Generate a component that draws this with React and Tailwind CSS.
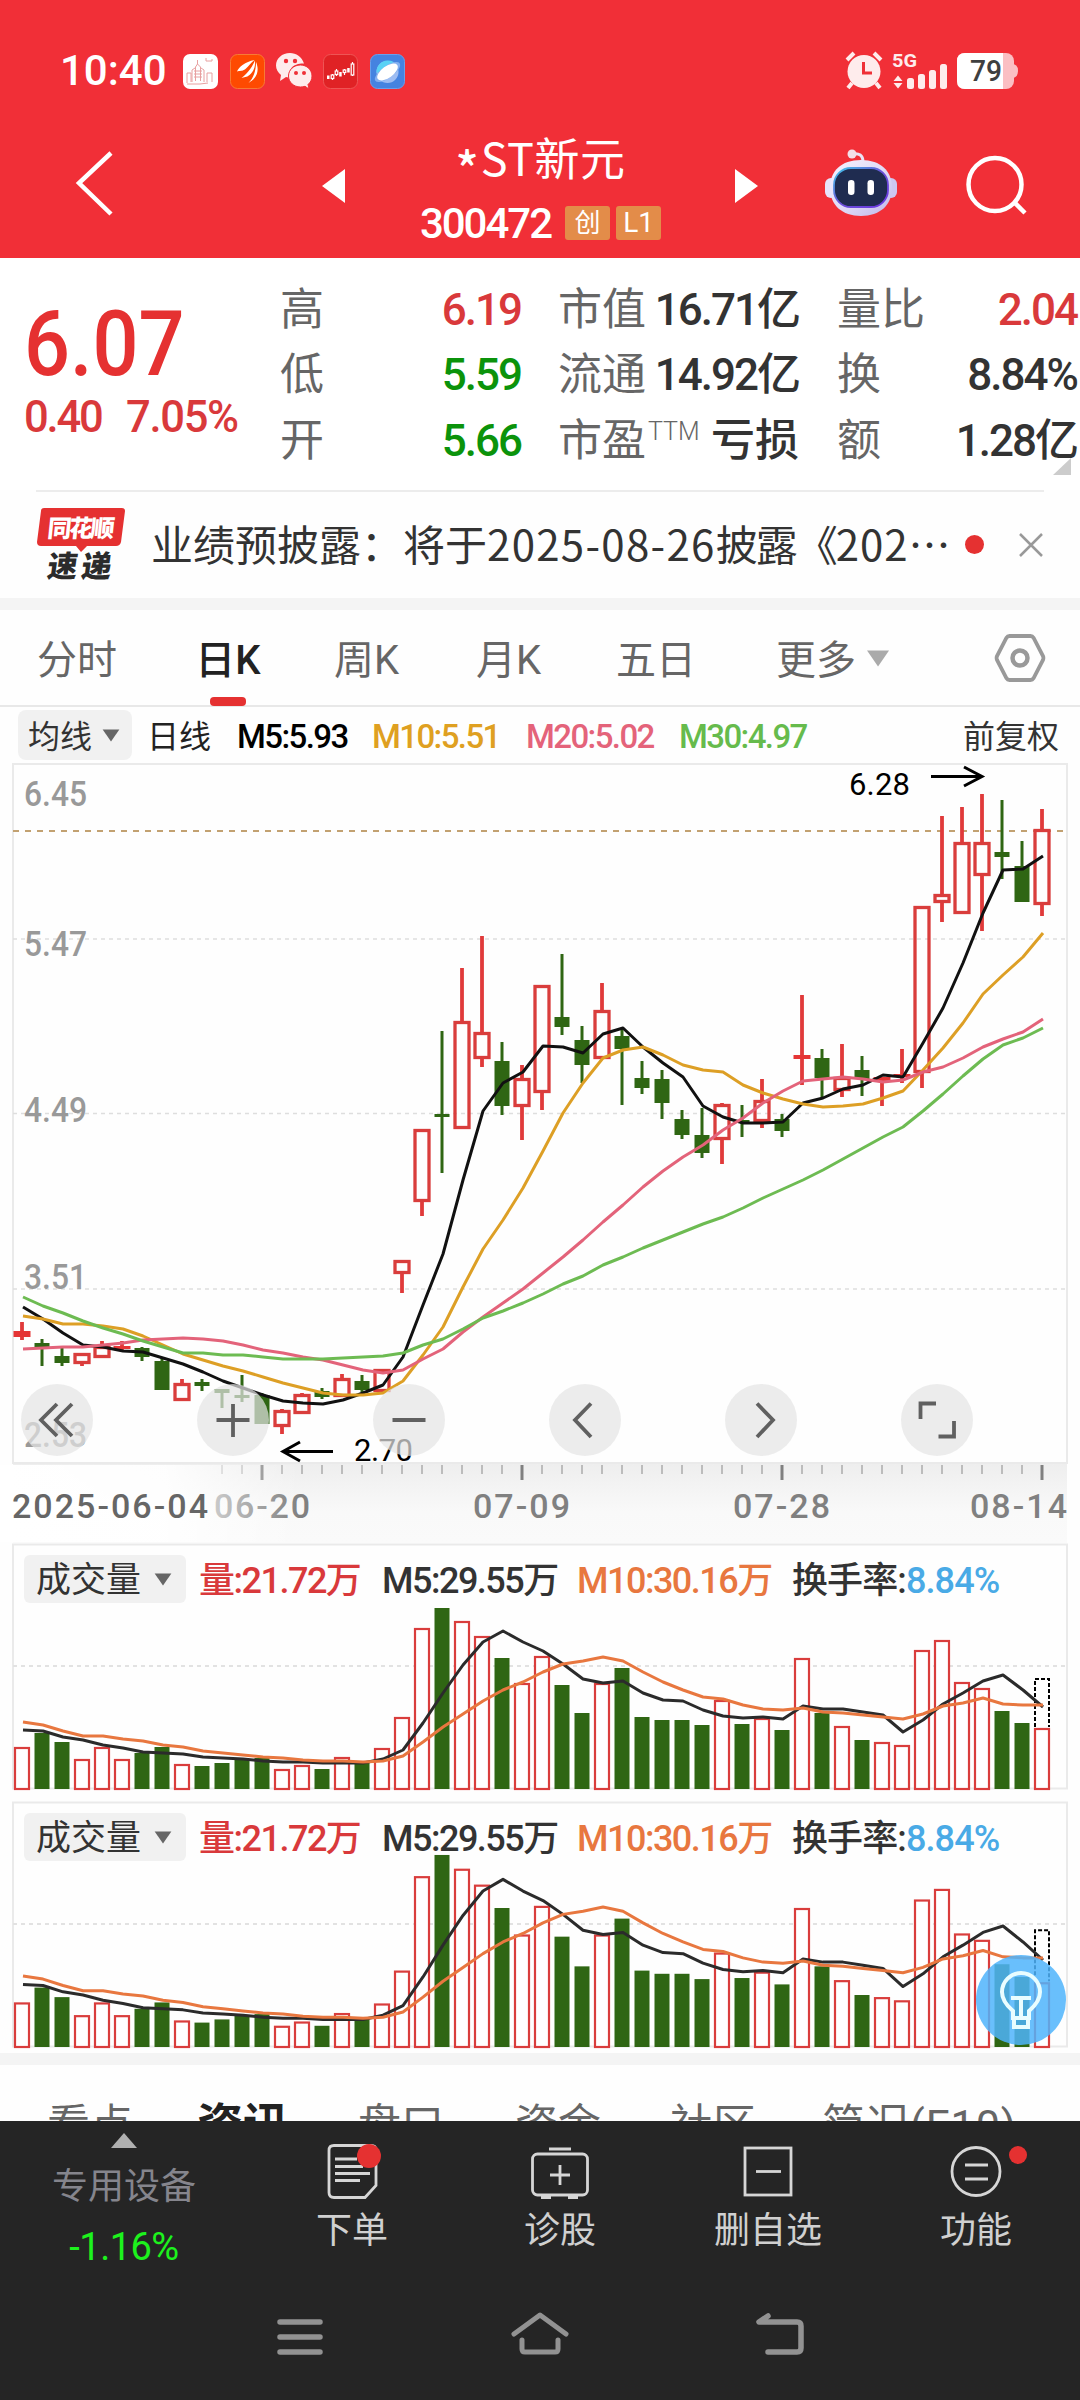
const NUM = 'Roboto, "Noto Sans CJK SC", sans-serif'

// [direction, body top, body bottom, wick top, wick bottom]
const candles = [
  ['r', 1331, 1337, 1322, 1340], ['g', 1343, 1347, 1339, 1366], ['g', 1356, 1363, 1348, 1366], ['r', 1353, 1364, 1353, 1366],
  ['r', 1346, 1358, 1341, 1358], ['r', 1346, 1349, 1341, 1351], ['g', 1348, 1357, 1347, 1361], ['g', 1361, 1390, 1358, 1390],
  ['r', 1383, 1401, 1379, 1401], ['g', 1382, 1386, 1379, 1391], ['g', 1389, 1393, 1389, 1408], ['g', 1395, 1398, 1375, 1402],
  ['g', 1395, 1424, 1393, 1424], ['r', 1410, 1427, 1409, 1434], ['r', 1394, 1414, 1393, 1414], ['g', 1391, 1397, 1388, 1399],
  ['r', 1378, 1397, 1374, 1397], ['g', 1381, 1390, 1375, 1392], ['r', 1369, 1392, 1369, 1392], ['r', 1260, 1274, 1260, 1293],
  ['r', 1129, 1202, 1129, 1216], ['g', 1114, 1117, 1031, 1173], ['r', 1021, 1129, 968, 1129], ['r', 1032, 1059, 936, 1067],
  ['g', 1061, 1106, 1042, 1115], ['r', 1078, 1107, 1065, 1140], ['r', 985, 1093, 985, 1110], ['g', 1017, 1027, 954, 1035],
  ['g', 1040, 1065, 1026, 1083], ['r', 1010, 1059, 983, 1059], ['g', 1036, 1049, 1028, 1105], ['g', 1078, 1088, 1061, 1094],
  ['g', 1079, 1103, 1070, 1119], ['g', 1119, 1135, 1110, 1139], ['g', 1135, 1153, 1108, 1158], ['r', 1104, 1140, 1103, 1164],
  ['g', 1120, 1122, 1105, 1137], ['r', 1100, 1122, 1079, 1128], ['g', 1119, 1131, 1114, 1137], ['r', 1055, 1059, 995, 1085],
  ['g', 1058, 1078, 1049, 1097], ['r', 1077, 1091, 1044, 1097], ['g', 1070, 1079, 1056, 1096], ['r', 1077, 1081, 1077, 1106],
  ['r', 1074, 1077, 1049, 1083], ['r', 906, 1073, 906, 1088], ['r', 894, 903, 816, 922], ['r', 842, 914, 807, 914],
  ['r', 842, 876, 794, 931], ['g', 852, 857, 800, 879], ['g', 866, 902, 841, 902], ['r', 829, 905, 809, 916],
]

const ma5 = [1307, 1319, 1333, 1345, 1347, 1351, 1352, 1358, 1364, 1372, 1381, 1388, 1395, 1401, 1403, 1404, 1400, 1393, 1385, 1357, 1305, 1254, 1180, 1111, 1083, 1072, 1046, 1047, 1053, 1034, 1028, 1047, 1063, 1077, 1106, 1117, 1123, 1123, 1122, 1103, 1098, 1089, 1085, 1075, 1077, 1043, 1008, 963, 913, 870, 869, 856]
const ma10 = [1316, 1319, 1324, 1324, 1326, 1329, 1336, 1345, 1354, 1360, 1366, 1371, 1377, 1383, 1388, 1393, 1395, 1395, 1393, 1381, 1355, 1327, 1287, 1249, 1220, 1188, 1151, 1113, 1083, 1058, 1050, 1047, 1055, 1065, 1070, 1072, 1085, 1093, 1099, 1104, 1107, 1106, 1104, 1098, 1091, 1070, 1048, 1023, 994, 975, 957, 933]
const ma20 = [1349, 1348, 1347, 1347, 1345, 1343, 1340, 1339, 1338, 1339, 1341, 1345, 1350, 1353, 1357, 1360, 1365, 1370, 1373, 1370, 1359, 1349, 1332, 1317, 1303, 1289, 1273, 1257, 1240, 1222, 1205, 1187, 1171, 1157, 1145, 1130, 1118, 1103, 1091, 1081, 1079, 1077, 1079, 1082, 1080, 1072, 1067, 1058, 1047, 1039, 1032, 1019]
const ma30 = [1297, 1306, 1313, 1321, 1328, 1334, 1341, 1347, 1353, 1353, 1355, 1355, 1357, 1359, 1359, 1359, 1358, 1357, 1356, 1353, 1345, 1339, 1329, 1318, 1311, 1303, 1294, 1284, 1276, 1265, 1257, 1248, 1240, 1232, 1224, 1217, 1208, 1198, 1189, 1180, 1170, 1159, 1148, 1137, 1127, 1111, 1094, 1076, 1059, 1045, 1038, 1028]

// bar heights measured up from the panel baseline
const volumes = [
  ['r', 42], ['g', 56], ['g', 47], ['r', 30], ['r', 42], ['r', 30], ['g', 36], ['g', 42], ['r', 25], ['g', 23], ['g', 26], ['g', 30], ['g', 31],
  ['r', 20], ['r', 24], ['g', 20], ['r', 32], ['g', 28], ['r', 41], ['r', 72], ['r', 161], ['g', 181], ['r', 168], ['r', 153], ['g', 131], ['r', 106],
  ['r', 133], ['g', 104], ['g', 76], ['r', 106], ['g', 121], ['g', 72], ['g', 69], ['g', 69], ['g', 64], ['r', 89], ['g', 65], ['r', 71], ['g', 59],
  ['r', 131], ['g', 76], ['r', 63], ['g', 49], ['r', 47], ['r', 44], ['r', 139], ['r', 149], ['r', 107], ['r', 101], ['g', 78], ['g', 66], ['r', 61],
]
const vol5 = [59, 58, 52, 49, 44, 41, 37, 36, 35, 32, 31, 30, 28, 27, 27, 26, 26, 26, 30, 39, 66, 96, 124, 147, 158, 147, 138, 125, 110, 106, 108, 96, 89, 88, 79, 73, 71, 72, 70, 83, 80, 80, 77, 74, 57, 69, 85, 96, 108, 114, 99, 82]
const vol10 = [67, 64, 58, 53, 53, 50, 48, 44, 42, 38, 36, 34, 32, 31, 29, 28, 28, 27, 28, 33, 47, 62, 75, 88, 99, 107, 117, 125, 128, 132, 128, 117, 107, 99, 92, 90, 84, 80, 79, 81, 77, 76, 74, 72, 70, 75, 83, 86, 91, 85, 84, 84]

const GREEN = '#2f6613'
const RED = '#d93d3c'

const cx = (i) => 22 + i * 20
const toPoints = (ys) => ys.map((y, i) => `${cx(i) + 1},${y}`).join(' ')

function Down({ className }) {
  return (
    <svg viewBox="0 0 18 14" className={className} fill="currentColor">
      <path d="M0 0.5h18L9 13.5z" />
    </svg>
  )
}

function StatusBar() {
  return (
    <div className="flex h-[71px] items-center pt-[1px] pl-[60px] text-white mt-[35px]">
      <span className="w-[123px] text-[42px] leading-none font-medium">10:40</span>
      <svg width="35" height="35" viewBox="0 0 35 35">
        <rect width="35" height="35" rx="7" fill="#fff" />
        <g stroke="#e8a0a0" fill="none" strokeWidth="1">
          <path d="M14.500 6v4l-2 3v14M14.500 10l3 3v14M9 28V16l3-2M21 28V16l-3-2M4 29V19h4v9M24 28v-9h5v9M11 17h8M11 20h8M11 23h8" />
          <path d="M4 30h13l8-1M23 4v3h6V5" />
        </g>
      </svg>
      <svg width="35" height="35" viewBox="0 0 35 35" className="ml-[12px]">
        <rect x=".5" y=".5" width="34" height="34" rx="7" fill="#fe4a01" stroke="#f77b35" />
        <g fill="#fff">
          <path d="M7 17.500c2-5 8-9.500 17.500-11.500-4 3-5.500 6-9 9-3 2.500-6 1.500-8.500 2.500z" />
          <path d="M11.500 24c4-3.500 9.500-8 13.500-17.500.5 7-1.500 11-5.500 14.500-3 2.500-5.500 2-8 3z" />
          <path d="M18.500 29c5-5 7.500-12 7.500-21 3.500 8 1.500 16-7.500 21z" />
        </g>
      </svg>
      <svg width="36" height="36" viewBox="0 0 36 36" className="ml-[11px]">
        <path d="M14 0C6 0 0 5.500 0 12.500c0 4 2 7 5 9.500l-1 6 6-4c2 .6 4 .6 5 .5C11 15 19 10 28 10.500 26 4 20 0 14 0z" fill="#feecec" />
        <path d="M24.500 12C17.500 12 12.500 17 12.500 23s5 11 12 11c1.500 0 3-.2 4.500-.7L33 36l-1-4.500c2.500-2 4-5 4-8.500 0-6-5-11-11.500-11z" fill="#feecec" stroke="#ef3037" strokeWidth="1" />
        <g fill="#ef3037">
          <circle cx="10" cy="8" r="2.200" /><circle cx="19" cy="8" r="2.200" /><circle cx="20" cy="20" r="2" /><circle cx="28" cy="20" r="2" />
        </g>
      </svg>
      <svg width="35" height="35" viewBox="0 0 35 35" className="ml-[11px]">
        <rect x=".5" y=".5" width="34" height="34" rx="7" fill="#e02225" stroke="#ee5555" />
        <g fill="none" stroke="#fff" strokeWidth="1.200">
          <path d="M9.500 20v6M13.500 15v7M21.500 15v6M29.500 8v14" />
          <rect x="8.200" y="21" width="2.600" height="3.500" fill="#e02225" />
          <rect x="12.200" y="17" width="2.600" height="3.500" fill="#e02225" />
          <rect x="20.200" y="16" width="2.600" height="2.500" fill="#e02225" />
          <rect x="28.200" y="10" width="2.600" height="11" fill="#e02225" />
        </g>
        <path d="M4 21.500h2.500V25H4zM16.200 18h2.500v4.500h-2.500zM24.200 14h2.500v4.500h-2.500z" fill="#fff" />
      </svg>
      <svg width="35" height="35" viewBox="0 0 35 35" className="ml-[12px]">
        <rect x=".5" y=".5" width="34" height="34" rx="7" fill="#4583e0" stroke="#69a0ec" />
        <circle cx="17.500" cy="18" r="11" fill="#9dbcf2" />
        <path d="M6.500 19C6 11 12 6 18 6.500c4 0 7 2 8.500 4.500z" fill="#5ad2f5" />
        <ellipse cx="17.500" cy="18" rx="15" ry="6" transform="rotate(-36 17.500 18)" fill="#83aff0" />
        <ellipse cx="17.500" cy="18" rx="12" ry="5.800" transform="rotate(-36 17.500 18)" fill="#fff" />
      </svg>
      <svg width="174" height="38" viewBox="0 0 174 38" className="ml-auto mr-[60px] overflow-visible">
        <g fill="#feecec">
          <circle cx="18" cy="19.500" r="16.500" />
          <path d="M1 8l7-7M28 1l7 7M6 31l-4 5M30 31l4 5" stroke="#feecec" strokeWidth="4" />
          <path d="M47.500 29l4.500-5.500 4.500 5.500zM47.500 31l4.500 5.500 4.500-5.500z" />
          <rect x="61" y="26" width="7" height="11" rx="2.500" />
          <rect x="72" y="22" width="7" height="15" rx="2.500" />
          <rect x="83" y="18" width="7" height="19" rx="2.500" />
          <rect x="94" y="12" width="7" height="25" rx="2.500" />
        </g>
        <path d="M17.500 10v11h8.500" fill="none" stroke="#ef3037" strokeWidth="3" />
        <text x="46" y="14.500" fontSize="18.500" fontWeight="700" fill="#feecec" textLength="25" lengthAdjust="spacingAndGlyphs">5G</text>
        <path d="M166 12q6 0 6 7t-6 7z" fill="#fbc0c4" />
        <rect x="111" y="1" width="57" height="36" rx="8" fill="#fbbfc3" />
        <path d="M119 1h38v36h-38q-8 0-8-8V9q0-8 8-8z" fill="#fff" />
        <text x="124" y="29" fontSize="29" fontWeight="500" fill="#3f3f3f" textLength="32" lengthAdjust="spacingAndGlyphs">79</text>
      </svg>
    </div>
  )
}

function TitleBar() {
  return (
    <div className="flex h-[151px] items-start text-white">
      <svg width="60" height="80" viewBox="0 0 60 80" className="mt-[37px] ml-[66px]">
        <path d="M45 10L13 40l32 31" fill="none" stroke="#fff" strokeWidth="4.500" />
      </svg>
      <svg width="24" height="34" viewBox="0 0 24 34" className="mt-[63px] ml-[196px]"><path d="M0 17L23 0v34z" fill="#fff" /></svg>
      <div className="flex w-[389px] flex-col items-center pt-[27px]">
        <div className="flex text-[45px] leading-[48px] font-['Noto_Sans_CJK_SC',sans-serif]">
          <span className="pt-[9px] text-[48px] font-medium">*</span>
          <span className="ml-[2px] tracking-[0.500px]">ST新元</span>
        </div>
        <div className="mt-[14px] flex h-[38px] items-center">
          <span className="pt-[2px] text-[42px] leading-none font-medium tracking-[-2px]">300472</span>
          <span className="ml-[14px] flex h-[34px] w-[45px] items-center justify-center rounded-[3px] bg-[#e38c49] text-[26px] leading-none">创</span>
          <span className="ml-[6px] flex h-[34px] w-[45px] items-center justify-center rounded-[3px] bg-[#e38c49] text-[28px] leading-none">L1</span>
        </div>
      </div>
      <svg width="24" height="34" viewBox="0 0 24 34" className="mt-[63px]"><path d="M23 17L0 0v34z" fill="#fff" /></svg>
      <svg width="74" height="68" viewBox="0 0 74 68" className="mt-[43px] ml-[65px]">
        <defs>
          <linearGradient id="shell" x1="0" y1="0" x2="1" y2="1">
            <stop offset="0" stopColor="#f6f3ff" /><stop offset=".6" stopColor="#dcd6f5" /><stop offset="1" stopColor="#bdb6e8" />
          </linearGradient>
          <linearGradient id="visor" x1="0" y1="0" x2="1" y2="1">
            <stop offset="0" stopColor="#3fc8e8" /><stop offset=".5" stopColor="#6a50d8" /><stop offset="1" stopColor="#6a35e0" />
          </linearGradient>
        </defs>
        <path d="M28 5q11-2 11 8" fill="none" stroke="#e9e2f4" strokeWidth="3" />
        <circle cx="28" cy="5" r="4.500" fill="#f3dfe8" />
        <rect x="1" y="29" width="12" height="20" rx="6" fill="#e7e3fa" />
        <rect x="61" y="29" width="12" height="20" rx="6" fill="#cdc6f0" />
        <path d="M37 11c20 0 31 11 31 28S56 67 37 67 6 56 6 39s11-28 31-28z" fill="url(#shell)" />
        <rect x="10" y="19" width="54" height="39" rx="17" fill="#1f2c50" stroke="url(#visor)" strokeWidth="1.800" />
        <rect x="24" y="31" width="6.500" height="15" rx="3.200" fill="#fff" />
        <rect x="43.500" y="31" width="6.500" height="15" rx="3.200" fill="#fff" />
      </svg>
      <svg width="64" height="64" viewBox="0 0 64 64" className="mt-[48px] ml-[66px]">
        <circle cx="31" cy="30.500" r="26.500" fill="none" stroke="#fff" strokeWidth="4.500" />
        <path d="M50 48l11 11" stroke="#fff" strokeWidth="4.500" />
      </svg>
    </div>
  )
}

function Stat({ label, sup, value, color }) {
  return (
    <div className="flex h-[65.5px] items-center justify-between">
      <span className="flex items-center text-[44px] leading-none text-[#666]">
        {label}
        {sup && <sup className="-mt-[18px] ml-[2px] top-0 text-[25px] leading-none font-light">{sup}</sup>}
      </span>
      <span className={`mr-[2px] text-[44px] leading-none font-medium ${value === '亏损' ? 'tracking-normal' : 'tracking-[-2px]'} ${color || 'text-[#333]'}`}>{value}</span>
    </div>
  )
}

function Quote() {
  return (
    <div className="flex h-[232px] bg-white">
      <div className="w-[254px] pl-[24px]">
        <div className="mt-[42px] h-[88px] origin-left scale-x-[.89] text-[91px] leading-[88px] font-medium text-[#e53131]">6.07</div>
        <div className="mt-[8px] flex text-[43.500px] leading-[44px] font-medium text-[#d9393b]">
          <span className="w-[102px] tracking-[-2.200px]">0.40</span>
          <span className="tracking-[-1.300px]">7.05%</span>
        </div>
      </div>
      <div className="mt-[19px] ml-[26px] w-[243px]">
        <Stat label="高" value="6.19" color="text-[#d9393b]" />
        <Stat label="低" value="5.59" color="text-[#0b930b]" />
        <Stat label="开" value="5.66" color="text-[#0b930b]" />
      </div>
      <div className="mt-[19px] ml-[35px] w-[243px]">
        <Stat label="市值" value="16.71亿" />
        <Stat label="流通" value="14.92亿" />
        <Stat label="市盈" sup="TTM" value="亏损" />
      </div>
      <div className="relative mt-[19px] ml-[36px] w-[242px]">
        <Stat label="量比" value="2.04" color="text-[#d9393b]" />
        <Stat label="换" value="8.84%" />
        <Stat label="额" value="1.28亿" />
        <svg viewBox="0 0 18 17" className="absolute top-[181px] right-[8px] h-[17px] w-[18px]"><path d="M18 0v17H0z" fill="#ccc" /></svg>
      </div>
    </div>
  )
}

function News() {
  return (
    <div className="mx-[36px] flex h-[108px] items-start border-t-2 border-[#ececec]">
      <svg width="90" height="76" viewBox="0 0 90 76" className="mt-[15px] overflow-visible">
        <path d="M8 1h78q3 0 3 3l-4 31q-1 4-5 4H51l-6 6-5-6H5q-4 0-4-4L5 4q0-3 3-3z" fill="#e53131" />
        <text x="11" y="30" transform="skewX(-6) translate(3 0)" fontSize="24" fontWeight="900" fill="#fff" textLength="67">同花顺</text>
        <text x="11" y="70" transform="skewX(-8) translate(9 0)" fontSize="30" fontWeight="900" fill="#2b2b2b" textLength="64">速递</text>
      </svg>
      <div className="mt-[25px] ml-[25px] w-[808px] text-[42px] leading-[52px] whitespace-nowrap text-[#333] font-['Noto_Sans_CJK_SC',sans-serif]">
        业绩预披露：将于<span className="tracking-[1.300px]">2025-08-26</span><span className="tracking-[-2px]">披露《</span><span className="tracking-[1px]">202…</span>
      </div>
      <i className="mt-[43px] ml-[6px] size-[19px] shrink-0 rounded-full bg-[#e53131]" />
      <svg width="26" height="26" viewBox="0 0 26 26" className="mt-[40px] ml-auto"><path d="M2 2l22 22M24 2L2 24" stroke="#999" strokeWidth="2.500" /></svg>
    </div>
  )
}

const tabs = [
  ['分时', 'w-[159px]'], ['日K', 'w-[138px]'], ['周K', 'w-[142px]'], ['月K', 'w-[140px]'], ['五日', 'w-[160px]'], ['更多', 'w-[91px]'],
]

function PeriodTabs() {
  return (
    <div className="flex h-[97px] items-stretch border-b-2 border-[#e8e8e8] pl-[37px] text-[40px] text-[#666]">
      {tabs.map(([t, w]) => (
        <div key={t} className={`${w} shrink-0 pt-[21px]`}>
          {t === '日K' ? (
            <div className="flex w-[64px] flex-col items-center font-medium whitespace-nowrap text-[#222]">
              <span className="h-[66px] leading-[60px]">{t}</span>
              <i className="h-[9px] w-[36px] rounded-[4px] bg-[#e53131]" />
            </div>
          ) : (
            <span className="leading-[60px]">{t}</span>
          )}
        </div>
      ))}
      <Down className="mt-[39px] h-[19px] w-[22px] text-[#aaa]" />
      <svg width="52" height="50" viewBox="0 0 52 50" className="mt-[23px] ml-auto mr-[34px]" fill="none" stroke="#999">
        <path d="M15.500 3h21q2 0 3 1.700L49 23q.8 2 0 4l-9.500 18.300q-1 1.700-3 1.700h-21q-2 0-3-1.700L3 27q-.8-2 0-4l9.500-18.300q1-1.700 3-1.700z" strokeWidth="3.800" />
        <circle cx="26" cy="25" r="7.500" strokeWidth="4.500" />
      </svg>
    </div>
  )
}

function IndicatorRow() {
  return (
    <div className="flex h-[56px] items-start pt-[3px] text-[33px] leading-[54px] font-medium tracking-[-1.600px] whitespace-nowrap">
      <div className="ml-[18px] flex h-[50px] w-[114px] items-center rounded-[8px] bg-[#f1f1f1] pt-[3px] pl-[10px] text-[32px] font-normal tracking-normal text-[#333]">
        均线<Down className="mb-[3px] ml-[10px] h-[13px] w-[18px] text-[#666]" />
      </div>
      <span className="ml-[15px] w-[90px] text-[32px] font-normal tracking-normal text-[#222]">日线</span>
      <span className="w-[135px] text-black">M5:5.93</span>
      <span className="w-[154px] text-[#dfa021]">M10:5.51</span>
      <span className="w-[153px] text-[#e4637a]">M20:5.02</span>
      <span className="text-[#66bb4c]">M30:4.97</span>
      <span className="mr-[21px] ml-auto text-[32px] font-normal tracking-normal text-[#333]">前复权</span>
    </div>
  )
}

const priceLabels = [['6.45', 806], ['5.47', 956], ['4.49', 1122], ['3.51', 1289], ['2.53', 1447]]
const dates = [['07-09', 473], ['07-28', 733], ['08-14', 970]]
const tools = [
  [57, 'M0-16L-16 0l16 16M15-16L-1 0l16 16'],
  [233, 'M0-16v33M-16.500 0h33'],
  [409, 'M-16.500 0h33'],
  [585, 'M6-16.500L-10 0 6 17'],
  [761, 'M-4-16.500L12 0-4 17'],
  [937, 'M-16.500-1v-15.500h15.500M1.500 16.500h15.500V1'],
]

function CandleChart() {
  return (
    <svg width="1080" height="781" viewBox="0 762 1080 781" className="block" fontFamily={NUM}>
      <defs>
        <linearGradient id="axis" x1="0" y1="0" x2="0" y2="1">
          <stop offset="0" stopColor="#eeeeee" /><stop offset=".6" stopColor="#f9f9f9" /><stop offset="1" stopColor="#fafafa" />
        </linearGradient>
        <linearGradient id="fade" x1="0" x2="1">
          <stop offset="0" stopColor="#fff" /><stop offset=".55" stopColor="#fff" stopOpacity=".92" /><stop offset="1" stopColor="#fff" stopOpacity="0" />
        </linearGradient>
      </defs>

      <rect x="13" y="1464" width="1054" height="79" fill="url(#axis)" />
      {candles.map((_, i) => {
        const major = i === 12 || i === 25 || i === 38 || i === 51
        return i > 9 && <path key={i} d={`M${cx(i)} 1465v${major ? 15 : 9}`} stroke={major ? '#808080' : '#999'} strokeWidth={major ? 3 : 1.2} />
      })}
      <g fontSize="34" fontWeight="500" fill="#808080">
        <text x="214" y="1518" textLength="96">06-20</text>
        {dates.map(([d, x]) => <text key={d} x={x} y="1518" textLength="97">{d}</text>)}
      </g>
      <rect x="0" y="1465" width="300" height="77" fill="url(#fade)" />
      <text x="12" y="1518" fontSize="34" fontWeight="500" fill="#666" textLength="196">2025-06-04</text>

      <rect x="13" y="764" width="1054" height="699" fill="none" stroke="#eaeaea" strokeWidth="2" />
      <path d="M13 939h1054M13 1113.500h1054M13 1289h1054" stroke="#dedede" strokeWidth="1.500" strokeDasharray="4 4" />
      <path d="M13 831h1054" stroke="#c2a171" strokeWidth="2" strokeDasharray="6 6" />
      {priceLabels.map(([t, y]) => (
        <text key={t} x="24" y={y} fontSize="35" fontWeight="500" fill="#999" textLength="63" lengthAdjust="spacingAndGlyphs">{t}</text>
      ))}

      {candles.map(([c, top, bottom, high, low], i) => {
        const x = cx(i)
        if (c === 'g') {
          return (
            <g key={i} fill={GREEN}>
              <rect x={x - 1.5} y={high} width="3" height={low - high} />
              <rect x={x - 7.5} y={top} width="15" height={bottom - top} />
            </g>
          )
        }
        return (
          <g key={i}>
            <path d={`M${x} ${high}V${top}M${x} ${bottom}V${low}`} stroke="#e03a3a" strokeWidth="3.8" />
            {bottom - top < 7
              ? <rect x={x - 8.5} y={top} width="17" height={bottom - top} fill="#e53535" />
              : <rect x={x - 7} y={top + 1.5} width="14" height={bottom - top - 3} fill="none" stroke={RED} strokeWidth="3.3" />}
          </g>
        )
      })}

      <g fill="none" strokeWidth="3" strokeLinejoin="round">
        <polyline points={toPoints(ma5)} stroke="#111" />
        <polyline points={toPoints(ma10)} stroke="#dd9f25" />
        <polyline points={toPoints(ma20)} stroke="#e3637a" />
        <polyline points={toPoints(ma30)} stroke="#6dbb52" />
      </g>

      <g fontSize="31" fill="#000">
        <text x="849" y="795" textLength="61">6.28</text>
        <text x="354" y="1461" textLength="59">2.70</text>
      </g>
      <path d="M931 776.500h50M964 767l18 9.500-18 9.500M333 1451.500h-50M300 1442l-17 9.500 17 9.500" fill="none" stroke="#000" strokeWidth="3" />

      {tools.map(([x, d]) => (
        <g key={x} transform={`translate(${x} 1420)`}>
          <circle r="36" fill="#e4e4e4" fillOpacity=".71" />
          <path d={d} fill="none" stroke="#606060" strokeWidth="3.800" />
        </g>
      ))}
    </svg>
  )
}

function VolumePanel({ height, scale }) {
  const base = 246
  return (
    <div className="grid shrink-0 overflow-hidden" style={{ height }}>
      <svg width="1080" height={height} viewBox={`0 0 1080 ${height}`} className="[grid-area:1/1]">
        <rect x="13" y="1.500" width="1054" height="244" fill="none" stroke="#eaeaea" strokeWidth="2" />
        <path d="M13 123h1054" stroke="#e2e2e2" strokeWidth="2" strokeDasharray="4 4" />
        {volumes.map(([c, v], i) => {
          const h = v * scale
          return c === 'g'
            ? <rect key={i} x={cx(i) - 7.5} y={base - h} width="15" height={h} fill={GREEN} />
            : <rect key={i} x={cx(i) - 7} y={base - h + 1} width="14" height={h - 1} fill="#fff" stroke={RED} strokeWidth="2.200" />
        })}
        <path d={`M1035 ${base - 62 * scale}V${base - 110 * scale}h14V${base - 62 * scale}`} fill="#fff" stroke="#000" strokeWidth="2" strokeDasharray="4 2" />
        <g fill="none" strokeWidth="3" strokeLinejoin="round">
          <polyline points={toPoints(vol5.map((v) => base - v * scale))} stroke="#2b2b2b" />
          <polyline points={toPoints(vol10.map((v) => base - v * scale))} stroke="#e8773f" />
        </g>
      </svg>
      <div className="flex h-[48px] items-center mt-[12px] text-[36px] leading-none font-medium tracking-[-1.500px] whitespace-nowrap [grid-area:1/1]">
        <div className="ml-[24px] flex h-[48px] w-[162px] items-center rounded-[6px] bg-[#f1f1f1] pt-[3px] pl-[12px] text-[35px] font-normal tracking-normal text-[#333]">
          成交量<Down className="mb-[3px] ml-[13px] h-[13px] w-[18px] text-[#666]" />
        </div>
        <span className="ml-[13px] w-[183px] pt-[3px] text-[#d9393b]">量:21.72万</span>
        <span className="w-[195px] pt-[3px] text-[#333]">M5:29.55万</span>
        <span className="w-[215px] pt-[3px] text-[#e8773f]">M10:30.16万</span>
        <span className="pt-[3px] tracking-[-0.900px] text-[#333]">换手率:<span className="text-[#49aae6]">8.84%</span></span>
      </div>
    </div>
  )
}

function InfoTabs() {
  return (
    <div className="flex h-[56px] items-start overflow-hidden pt-[30px] pl-[47px] text-[43px] leading-[60px] whitespace-nowrap text-[#666]">
      <span className="w-[150px]">看点</span>
      <span className="w-[161px] text-[46px] font-bold text-[#222]">资讯</span>
      <span className="w-[157px]">盘口</span>
      <span className="w-[155px]">资金</span>
      <span className="w-[152px]">社区</span>
      <span className="tracking-[1px]">简况(F10)</span>
    </div>
  )
}

const actions = [
  {
    label: '下单',
    icon: (
      <>
        <path d="M12 4.500h37q5 0 5 5v35L43 56.500H12q-5 0-5-5v-42q0-5 5-5z" />
        <path d="M13 18h22M13 25.500h28M13 32.500h35M13 39.500h25" />
        <circle cx="47" cy="15" r="12" fill="#e53131" stroke="none" />
      </>
    ),
  },
  {
    label: '诊股',
    icon: (
      <>
        <rect x="2.500" y="13" width="55" height="41" rx="5" />
        <path d="M19 8h22M11 56.500h10M38 56.500h10M30 24v20M20 34h20" />
      </>
    ),
  },
  {
    label: '删自选',
    icon: (
      <>
        <rect x="7" y="7" width="46" height="47" />
        <path d="M18 30.500h25" />
      </>
    ),
  },
  {
    label: '功能',
    icon: (
      <>
        <circle cx="30" cy="30.500" r="24" />
        <path d="M19 24h23M19 38h23" />
        <circle cx="72" cy="14" r="9" fill="#e53131" stroke="none" />
      </>
    ),
  },
]

function BottomBar() {
  return (
    <div className="flex h-[160px] text-[#d0d0d0]">
      <div className="flex w-[248px] flex-col items-center">
        <svg width="26" height="15" viewBox="0 0 26 15" className="mt-[12px]"><path d="M13 0l13 15H0z" fill="#b0b0b0" /></svg>
        <span className="mt-[17px] text-[36px] leading-[44px] text-[#85858d]">专用设备</span>
        <span className="mt-[16px] text-[38px] leading-[44px] tracking-[-0.500px] text-[#1df21d]">-1.16%</span>
      </div>
      {actions.map((a) => (
        <div key={a.label} className="flex w-[208px] flex-col items-center pt-[20px]">
          <svg width="60" height="60" viewBox="0 0 60 60" className="overflow-visible" fill="none" stroke="#d6d6d6" strokeWidth="2.800">{a.icon}</svg>
          <span className="mt-[8px] text-[36px] leading-[44px]">{a.label}</span>
        </div>
      ))}
    </div>
  )
}

export default function App() {
  return (
    <div className="relative h-[2400px] w-[1080px] overflow-hidden bg-[#fefefe] font-[Roboto,'Noto_Sans_CJK_SC',sans-serif]">
      <div className="flex h-[258px] flex-col bg-[#f12f37]">
        <StatusBar />
        <TitleBar />
      </div>
      <Quote />
      <News />
      <div className="h-[12px] bg-[#f4f4f4]" />
      <PeriodTabs />
      <div className="h-[55px]"><IndicatorRow /></div>
      <CandleChart />
      <VolumePanel height={258} scale={1} />
      <VolumePanel height={252} scale={1.061} />
      <div className="h-[12px] bg-[#f4f4f4]" />
      <InfoTabs />
      <div className="h-[279px] bg-[#252525]">
        <BottomBar />
        <svg width="1080" height="119" viewBox="0 2281 1080 119" fill="none" stroke="#929292" strokeWidth="5.500" strokeLinecap="round" strokeLinejoin="round">
          <path d="M280 2322h40M280 2337h40M280 2352h40" />
          <path d="M514 2334l26-19 26 19M522 2340v9q0 3 3 3h30q3 0 3-3v-9" strokeWidth="5" />
          <path d="M768 2316l-9 6h38q4 0 4 4v22q0 4-4 4h-29" />
        </svg>
      </div>
      <svg width="90" height="90" viewBox="0 0 90 90" className="absolute top-[1955px] left-[976px]" fill="none" stroke="#e9fdff" strokeWidth="4">
        <circle cx="45" cy="45" r="45" fill="#4fb4fb" fillOpacity=".85" stroke="none" />
        <path d="M37 63V56C30 50 26 44 26 37a19 19 0 0 1 38 0c0 7-4 13-11 19v7zM35 43h20M45 43v19M38 64v8h14v-8" />
      </svg>
    </div>
  )
}
